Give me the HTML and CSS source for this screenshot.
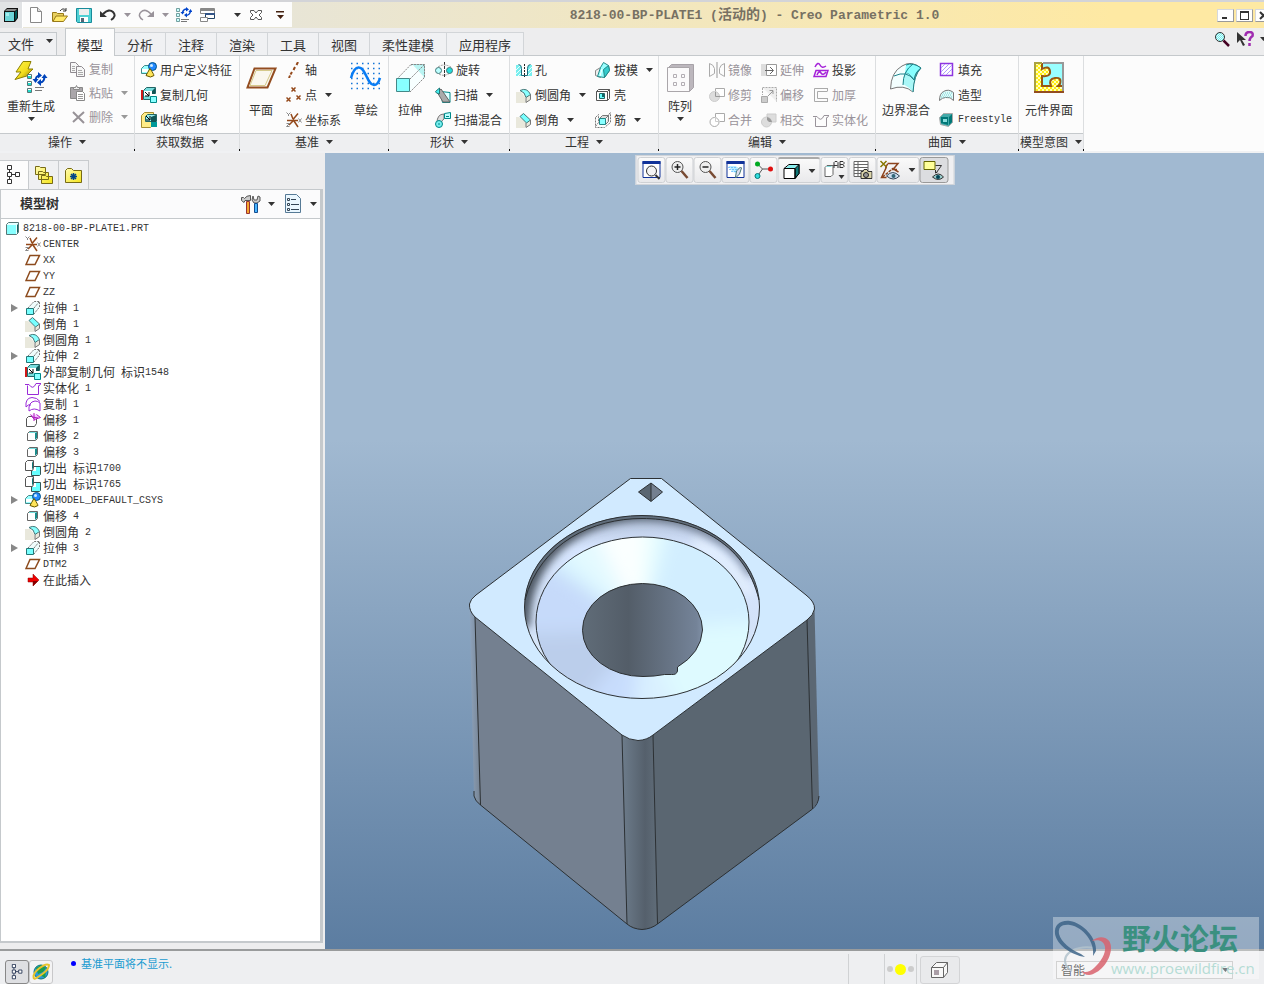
FILE: index.html
```html
<!DOCTYPE html>
<html lang="zh-CN">
<head>
<meta charset="utf-8">
<title>8218-00-BP-PLATE1 (活动的) - Creo Parametric 1.0</title>
<link rel="stylesheet" href="styles.css">
</head>
<body>
<svg class="sprite" aria-hidden="true">
  <defs>
    <linearGradient id="gold" x1="0" y1="0" x2="1" y2="1"><stop offset="0" stop-color="#fff44a"/><stop offset=".55" stop-color="#f2dc1c"/><stop offset="1" stop-color="#7a6a00"/></linearGradient>
    <linearGradient id="ice" x1="0" y1="0" x2="1" y2="1"><stop offset="0" stop-color="#fff"/><stop offset="1" stop-color="#7ff"/></linearGradient>
    <linearGradient id="folder" x1="0" y1="0" x2="1" y2="1"><stop offset="0" stop-color="#fffbb0"/><stop offset="1" stop-color="#f5e51c"/></linearGradient>
    <pattern id="bluecheck" width="2" height="2" patternUnits="userSpaceOnUse"><path fill="#dff" d="M0 0h2v2H0z"/><path fill="#7ee" d="M0 0h1v1H0zM1 1h1v1H1z"/></pattern>
    <pattern id="bigcheck" width="4" height="4" patternUnits="userSpaceOnUse"><path fill="#ffb" d="M0 0h4v4H0z"/><path fill="#fe1" d="M0 0h2v2H0zM2 2h2v2H2z"/></pattern>
  </defs>
  <symbol id="caret" viewBox="0 0 7 4"><path fill="currentColor" d="M0 0h7L3.500 4z"/></symbol>
  <symbol id="app" viewBox="0 0 16 16"><path fill="#111" d="M1 4l3-3h11v10l-3 4H1z"/><path fill="#888" d="M2 4l2-2h10l-2 2z"/><path fill="#055" d="M12 5l2-2v8l-2 2z"/><path fill="#6ed5d8" d="M2 5h9v9H2z"/><path fill="#a5ecee" d="M3 6h3v3H3z"/></symbol>
  <symbol id="new" viewBox="0 0 16 16"><path fill="#fff" stroke="#888" d="M2.500.5h7l4 4v11h-11z"/><path fill="#ddd" stroke="#888" d="M9.500.5v4h4"/></symbol>
  <symbol id="open" viewBox="0 0 16 16"><path fill="#e8d060" stroke="#997a18" d="M.5 14.500v-9h4l1 1h6v3"/><path fill="#ffe968" stroke="#997a18" d="M1 14.500l3-5.500h11.500l-4 5.500z"/><path fill="none" stroke="#333" d="M8 4q3-4 6-.5m0-2.500v3h-3"/></symbol>
  <symbol id="save" viewBox="0 0 16 16"><path fill="#4fd0d4" stroke="#188b9a" d="M.5 1.500h15v14H1.500l-1-1z"/><path fill="#eee" d="M3 2h10v6H3z"/><path fill="#fff" d="M4 10h8v5H4z"/><path fill="#567" d="M5 11h3v4H5z"/></symbol>
  <symbol id="undo" viewBox="0 0 16 16"><path fill="none" stroke="currentColor" stroke-width="2" d="M3 7Q9 1 13 5t-2 8"/><path fill="currentColor" d="M0 4v6h7z"/></symbol>
  <symbol id="redo" viewBox="0 0 16 16"><path fill="none" stroke="currentColor" stroke-width="1.500" d="M13 7Q7 1 3 5t2 8"/><path fill="currentColor" d="M16 4v6H9z"/></symbol>
  <symbol id="regen" viewBox="0 0 16 16"><path fill="#cff" stroke="#588" stroke-width=".8" d="M.5 1.500h3v3h-3zM.5 6.500h3v3h-3zM.5 11.500h3v3h-3z"/><path stroke="#777" d="M5 12.500h8M5 14.500h6"/><path fill="none" stroke="#04c" stroke-width="1.500" d="M6.500 6Q7 2 11 2M14.500 4Q14 8 10 8.500"/><path fill="#04c" d="M10 0l3 2.500-3 2zM11 6v4.500L8 8zM4.500 5h4L6.500 7.500zM12.500 5h4l-2-3z"/></symbol>
  <symbol id="wins" viewBox="0 0 16 16"><path fill="#fff" stroke="#888" d="M.5 1.500h14v5H.5z"/><path fill="#888" d="M1 2h14v2H1z"/><path fill="#fff" stroke="#246" d="M5.500 6.500h9v5h-9z"/><path fill="#358" d="M5 6h10v2H5z"/><path fill="#fff" stroke="#888" d="M.5 10.500h7v4h-7z"/></symbol>
  <symbol id="closewin" viewBox="0 0 16 16"><path fill="#fff" stroke="#555" d="M2.500 3.500H6L8 6l2-2.500h3.500v2L11 8l2.500 2.500v2H10L8 10l-2 2.500H2.500v-2L5 8 2.500 5.500z"/></symbol>
  <symbol id="custom" viewBox="0 0 9 8"><path fill="#421" d="M0 0h8v1.500H0zM1 4h7L4.500 8z"/></symbol>
  <symbol id="bolt" viewBox="0 0 34 34"><path fill="url(#gold)" stroke="#8d8000" d="M9 .5h8L14 8h5L13 14h3L1 18.500 7 11H2z"/><path fill="#fff" stroke="#577" d="M13.500 13.500h4v4h-4zM13.500 20.500h4v4h-4zM13.500 27.500h4v4h-4z"/><path fill="#2dc" d="M14 15h3v2h-3zM14 22h3v2h-3zM14 29h3v2h-3z"/><path stroke="#777" d="M21 26.500h9M21 29.500h7"/><path fill="none" stroke="#04b" stroke-width="2" d="M21.500 20q0-5 4-5.500M30.500 15q0 6-4 6.500"/><path fill="#04b" d="M24 11l4 3.500-4 3zM27 18v7l-4-3.500zM18.500 18h6l-3 4zM27.500 17h6l-3-4z"/></symbol>
  <symbol id="copy" viewBox="0 0 16 16"><path fill="#f7f7f7" stroke="#8f8a90" d="M.5 1.500h5l3 3v7h-8z"/><path fill="#f7f7f7" stroke="#8f8a90" d="M6.500 5.500h5l3 3v7h-8z"/><path stroke="#aaa" d="M2 5.500h3M2 7.500h3M2 9.500h3M8 9.500h4M8 11.500h5M8 13.500h5"/></symbol>
  <symbol id="paste" viewBox="0 0 16 16"><path fill="#aaa6aa" stroke="#888" d="M.5 2.500h12v11H.5z"/><path fill="#eee" stroke="#888" d="M3.500 4.500v-2h2l1-2 1 2h2v2z"/><path fill="#fff" stroke="#888" d="M6.500 6.500h6l2 2v7h-8z"/><path stroke="#999" d="M8 9.500h5M8 11.500h5M8 13.500h5"/></symbol>
  <symbol id="delete" viewBox="0 0 16 16"><path stroke="#979297" stroke-width="2" d="M3 3l11 11M14 3L3 13"/></symbol>
  <symbol id="udf" viewBox="0 0 16 16"><path fill="#9ff" stroke="#488" d="M.5 6.500l3-3h6v6l-2 2h-7z"/><path fill="#fff" d="M1 7h6v3H1z"/><circle cx="11.500" cy="4.500" r="4" fill="#28f" stroke="#058"/><circle cx="10.500" cy="3.500" r="1.500" fill="#cef"/><path fill="#ffe55a" stroke="#650" d="M9 6.500q4 6 4 7-3 3-8 0 1-2 4-7z"/></symbol>
  <symbol id="copygeom" viewBox="0 0 16 16"><path fill="#d01818" d="M0 3h2v10H0z"/><path fill="#7dd" stroke="#266" d="M2.500 3.500l3-3h9v6h-4v6h-8z"/><path fill="#fff" d="M3 4h8v5H3z"/><path fill="#155" d="M11 4l3-3v6h-3z"/><path stroke="#000" d="M4 5l4 4M8 5v4H4" fill="none"/><path fill="#8ff" stroke="#088" d="M9.500 9.500h6v6h-6z"/></symbol>
  <symbol id="shrink" viewBox="0 0 16 16"><path fill="#ffec88" stroke="#a58c30" d="M.5 3.500l3-3h9v12l-3 3h-9z"/><path fill="#9ee" stroke="#266" d="M4.500 4.500l2-2h9v7h-11z"/><path fill="#155" d="M10 5l5-2v7h-5z"/><path stroke="#000" fill="none" d="M5 4l4 4M9 4v4H5"/><path fill="#099" d="M10 10h6v5h-6z"/></symbol>
  <symbol id="planebig" viewBox="0 0 34 34"><path fill="#faf7ee" stroke="#934d20" stroke-width="2" d="M10.500 7.500h21l-8 19h-20z"/><path fill="none" stroke="#d5c98a" d="M12 9.500h16l-7 15H6z"/></symbol>
  <symbol id="plane" viewBox="0 0 16 16"><path fill="none" stroke="#8d4b1d" stroke-width="1.500" d="M5 3.500h9.500l-4.500 9H1z"/></symbol>
  <symbol id="axis" viewBox="0 0 16 16"><path stroke="#94491b" stroke-width="2" d="M12 0l-1.500 3M9 5L7.500 8M6 10l-1.500 2.500M4 13.500L3 16"/></symbol>
  <symbol id="points" viewBox="0 0 16 16"><path stroke="#94491b" stroke-width="1.500" d="M5.500.5l4 4m0-4l-4 4M.5 10.500l4 4m0-4l-4 4M10.500 8.500l4 4m0-4l-4 4"/></symbol>
  <symbol id="csys" viewBox="0 0 16 16"><path stroke="#94491b" stroke-width="1.500" d="M1 8.500h11M7 7.500l5-6M7 7L5 2M8 9l4 6M7 9l-4 4"/><path stroke="#888" fill="none" d="M.5.5l2 2 2-2M2.500 2v2M12.500 6.500l3 4m0-4l-3 4M.5 11.500h3l-3 3h3"/></symbol>
  <symbol id="sketch" viewBox="0 0 34 34"><path stroke="#1475d8" stroke-width="1.500" stroke-dasharray="1.500 4" d="M2 2.500h30M2 7.500h30M2 12.500h30M2 17.500h30M2 22.500h30M2 27.500h30"/><path fill="none" stroke="#087cf4" stroke-width="2.500" d="M2 17Q5 6 10 6.500C17 7 18 24 25 24Q29 24 31 17"/></symbol>
  <symbol id="extrudebig" viewBox="0 0 34 34"><path fill="#a6eff2" stroke="#5aa" d="M18.500 3.500h13v13h-13z" opacity=".6"/><path fill="#f7ffff" d="M4 18L19 4h12v12L17 31z"/><path fill="#b9f4f2" d="M20 4h11v12z"/><path fill="none" stroke="#888" stroke-dasharray="2 1" d="M4 18L18 3.500M17 18L31 4M17 31l14-14M18 3.500h13.500V17"/><path fill="#8ff" stroke="#488" d="M3.500 17.500h13v13h-13z"/></symbol>
  <symbol id="extrude" viewBox="0 0 16 16"><path fill="#effcfc" d="M3 8L9 1.500h5.500V7L9 14"/><path fill="none" stroke="#777" stroke-dasharray="2 1" d="M3 8L9 1.500h5.500V7L9 14M9 8l5-6"/><path fill="#7ff" stroke="#277" d="M1.500 8.500h7v6h-7z"/></symbol>
  <symbol id="revolve" viewBox="0 0 18 16"><path stroke="#333" stroke-dasharray="3 1" d="M9.500 0v16"/><path fill="none" stroke="#999" stroke-dasharray="2 1" d="M3 5Q9 1 16 5M4 12q5 3 11-1"/><circle cx="3.500" cy="8.500" r="3" fill="#bff" stroke="#477"/><circle cx="14.500" cy="8.500" r="3" fill="#2dd" stroke="#477"/></symbol>
  <symbol id="sweep" viewBox="0 0 16 16"><path fill="#dff" stroke="#088" d="M5.500 4.500l9.500 1v10H7.500z"/><path fill="#aaa" stroke="#666" d="M2 5l4-3 9 13H8z"/><path fill="#4ee" stroke="#277" d="M.5 4.500l4-3.500v6l-3-1z"/></symbol>
  <symbol id="sweepblend" viewBox="0 0 16 16"><path fill="#ddd" stroke="#777" d="M2 11Q2 2 9 2v5q-3 1-3 6z"/><path fill="#bff" stroke="#088" d="M9.500 1.500l6-1v6h-6z"/><circle cx="4" cy="12" r="3.500" fill="#7ee" stroke="#088"/><path fill="none" stroke="#088" d="M11 4.500h3M3 12h2"/></symbol>
  <symbol id="hole" viewBox="0 0 16 16"><path fill="#7ee" d="M0 3h16v11H0z"/><path stroke="#e8ffff" d="M0 8l5-5M0 12l9-9M2 14L13 3M7 14l9-9M11 14l5-5"/><path fill="#fff" stroke="#1a6a7a" d="M2.500 2.500q3 0 3 4v7h6v-7q0-4 3-4"/><path stroke="#222" stroke-dasharray="2 1" d="M8.500 2v13"/></symbol>
  <symbol id="round" viewBox="0 0 16 16"><path fill="#e9e8dc" d="M0 5h5l4 5v6H0zM9 16l6-3V7l-5 4z"/><path fill="#8ff" stroke="#477" d="M4 3.500Q11 0 14.500 7.500L10 10.500Q9 5 4 3.500z"/><path fill="none" stroke="#777" d="M10 10.500v5l4.500-3v-5"/></symbol>
  <symbol id="chamfer" viewBox="0 0 16 16"><path fill="#e9e8dc" d="M0 5h3l6 5v6H0zM9 15l5-2V8l-5 3z"/><path fill="#7ff" stroke="#477" d="M4 4.500l3.500-3L14.500 8 10.500 11z"/><path fill="none" stroke="#777" d="M10 11v4.500l4.500-3V8"/></symbol>
  <symbol id="draft" viewBox="0 0 16 16"><path fill="#eee" stroke="#888" d="M.5 8.500l5-3v10l-5-2z"/><path fill="#9ff" stroke="#288" d="M5.500 5.500l3-5 5 3 1 5-5 7-7-1z"/><path fill="#3cc" stroke="#288" d="M9.500 15.500l-1-8 5-4 1 5z"/><path stroke="#fff" d="M7 7l-2 7"/></symbol>
  <symbol id="shell" viewBox="0 0 16 16"><path fill="#fff" stroke="#555" d="M1.500 4.500l2-2h11v9l-2 2h-11zM1.500 4.500h11v9M12.500 4.500l2-2"/><path fill="#6ff" stroke="#266" d="M4.500 6.500h5v5h-5z"/><path fill="#166" d="M7 7h2v3H7z"/></symbol>
  <symbol id="rib" viewBox="0 0 16 16"><path fill="none" stroke="#777" stroke-dasharray="2 1" d="M.5 5.500v10h9l6-5v-10M.5 5.500l3-3v8l-3 4M12 5l3-4"/><path fill="#ddd" stroke="#777" d="M4.500 6.500l3-3h6l-3 3M13.500 3.500v6l-3 3"/><path fill="#8ff" stroke="#288" d="M4.500 6.500h6v6h-6z"/></symbol>
  <symbol id="array" viewBox="0 0 34 34"><path fill="#bcb7bd" stroke="#a7a2a8" d="M4.500 7.500l4-4h22v23l-4 4z"/><path fill="#fbfafb" stroke="#aaa6aa" d="M4.500 6.500h22v24h-22z"/><path fill="none" stroke="#b3aeb4" d="M10.500 13.500h3v3h-3zM18.500 13.500h3v3h-3zM10.500 21.500h3v3h-3zM18.500 21.500h3v3h-3z"/></symbol>
  <symbol id="mirror" viewBox="0 0 16 16"><path fill="none" stroke="#aaa" d="M.5 1.500q4 1 5 5v5l-5 3zM15.500 1.500q-4 1-5 5v5l5 3z"/><path stroke="#999" d="M8 0v16"/></symbol>
  <symbol id="trim" viewBox="0 0 16 16"><path fill="#fff" stroke="#aaa" d="M6.500 1.500h9v8h-9z"/><circle cx="5.500" cy="9.500" r="5" fill="#ddd" stroke="#ccc"/><path fill="none" stroke="#999" d="M6.500 5v4.500H11"/></symbol>
  <symbol id="merge" viewBox="0 0 16 16"><path fill="#fff" stroke="#aaa" d="M6.500 1.500h9v8h-9z"/><circle cx="5.500" cy="10" r="4.500" fill="#fff" stroke="#aaa"/><path fill="none" stroke="#ccc" d="M6.500 5v4.500H11"/></symbol>
  <symbol id="extend" viewBox="0 0 16 16"><path fill="#ddd" d="M0 2h5v12H0z"/><path fill="#fff" stroke="#999" d="M5.500 2.500h10v11h-10z"/><path stroke="#666" fill="none" d="M4 8.500h8M9 5l3.500 3.500L9 12"/></symbol>
  <symbol id="offset" viewBox="0 0 16 16"><path fill="#eee" stroke="#aaa" stroke-dasharray="2 1" d="M1.500.5h14v14M1.500 1v7"/><path fill="#ccc" stroke="#aaa" d="M.5 9.500h6v6h-6z"/><path stroke="#999" fill="none" d="M7 9l5-5M8.500 3.500H12V7"/></symbol>
  <symbol id="intersect" viewBox="0 0 16 16"><path fill="#ddd" stroke="#ccc" d="M6 2h9v8H6z"/><circle cx="5.500" cy="10" r="5" fill="#ddd" stroke="#ccc"/><path fill="#999" d="M6 5q4 1 5 5H8L6 8z"/></symbol>
  <symbol id="project" viewBox="0 0 16 16"><path fill="none" stroke="#a522d8" stroke-width="1.500" d="M2 5q3-6 5-2t6 1M1 14.500l2-6h12l-2 6zM4 13q2-5 4-2t5-1"/></symbol>
  <symbol id="thicken" viewBox="0 0 16 16"><path fill="none" stroke="#aaa" d="M14.500 1.500H1.500v13h13M14.500 4.500h-10v7h10M14.500 1v3M14.500 11v4"/></symbol>
  <symbol id="solidify" viewBox="0 0 16 16"><path fill="none" stroke="currentColor" d="M2.500 5.500v9h11v-9M0 4.500h4q4 6 7-1h5l-2.500 3"/></symbol>
  <symbol id="boundary" viewBox="0 0 34 34"><path fill="#f3ffff" stroke="#777" d="M1.500 28Q2 11 13 5q9-6 19 2-8 6-8 24-9-8-22.500-3z"/><path fill="#8ff" stroke="#1b8289" d="M16 12q5 0 9 7 1-8 7-12-8-6-15-3"/><path fill="#aaf7f7" d="M14 23q0-9 2.500-11 5 1 8.500 7l-1 12q-4-5-10-8z"/><path fill="none" stroke="#1b8289" d="M5 15q13-6 20 4M14 24q0-14 10-21M24 31q1-17 8-24"/></symbol>
  <symbol id="fill" viewBox="0 0 16 16"><path fill="#fff" stroke="#8e35e0" stroke-width="1.500" d="M1.500 1.500h12v12h-12z"/><path stroke="#b09aff" d="M2 6l4-4M2 10l8-8M3 13L13 3M7 13l6-6"/></symbol>
  <symbol id="style" viewBox="0 0 16 16"><path fill="#dffcfb" stroke="#777" d="M.5 13.500q0-7 4-9 5-3 10 1v8q-3-4-8-3-3 0-6 3z"/><path stroke="#7cc" stroke-dasharray="1 1" d="M3 8h10M4 6h9M2 10h11"/></symbol>
  <symbol id="freestyle" viewBox="0 0 16 16"><path fill="#4aa" stroke="#aaa" d="M.5 5.500l4-4 9 0v9l-4 4-8-2z"/><path fill="#077" d="M2 5h7v8l-7-2zM10 5l3-3v8l-3 3z"/><path fill="#8dd" d="M4 7h4v3H4z"/></symbol>
  <symbol id="interface" viewBox="0 0 34 34"><path fill="#9ff" d="M3 2h29v28H3z"/><path fill="url(#bigcheck)" d="M3 2h7v6q7-4 8 2t-8 5v10h9q-3-7 4-8t5 6l-2 2h6v6H3z"/><path fill="none" stroke="#985713" stroke-width="2" d="M10 2v6q7-4 8 2t-8 5v10h9q-3-7 4-8t5 6l-2 2h6"/><path fill="none" stroke="#aaa240" stroke-width="2" d="M10 2H3v29"/><path fill="none" stroke="#934d20" stroke-width="2" d="M2 31h30"/><path fill="none" stroke="#999" stroke-width="2" d="M31 30V2H11"/></symbol>
  <symbol id="search" viewBox="0 0 16 16"><circle cx="6" cy="6" r="4.500" fill="url(#bluecheck)" stroke="#333"/><path stroke="#402" stroke-width="2.500" d="M9.500 9.500L15 15"/></symbol>
  <symbol id="help" viewBox="0 0 18 16"><path fill="#333" d="M1 1v11l3-3 3 6 2-1-3-5h4z"/><path fill="none" stroke="#a02bb0" stroke-width="2.500" d="M9.500 5q0-4 4-4t3 4q-3 2-3 5M13.500 12v3"/></symbol>
  <symbol id="treeico" viewBox="0 0 16 20"><path fill="#fff" stroke="currentColor" d="M1.500.5h4v4h-4zM1.500 7.500h4v4h-4zM1.500 14.500h4v4h-4zM9.500 7.500h4v4h-4zM3.500 5v2M3.500 12v2M6 9.500h3"/></symbol>
  <symbol id="folders" viewBox="0 0 20 20"><g fill="url(#folder)" stroke="#776b16"><path d="M1.500 9.500v-8h4l1 1h5v7zM4.500 14.500v-8h4l1 1h5v7zM7.500 18.500v-8h4l1 1h6v7z"/></g></symbol>
  <symbol id="favorite" viewBox="0 0 18 18"><path fill="url(#folder)" stroke="#776b16" d="M.5 16.500V4.500l2-2h4l2 2h8v12z"/><path stroke="#048" stroke-width="1.500" d="M5 10.500h7M8.500 7v7M6 8l5 5M11 8l-5 5"/></symbol>
  <symbol id="tools" viewBox="0 0 20 20"><path fill="#ccc" stroke="#555" d="M.5 6.500v-3h2l1 1q2-3 6-3v5H4l-1 2zM12 2l1 4h3l1-4 2 1v4l-3 2h-3l-2-3z"/><path fill="#f5a52d" stroke="#933" d="M5.500 7.500h3v12h-3z"/><path fill="#47b5ff" stroke="#134d91" d="M13.500 9.500h3v9h-3z"/></symbol>
  <symbol id="list" viewBox="0 0 18 20"><path fill="#eaf7ff" stroke="#567a96" d="M1.500.5h11l4 4v14h-15z"/><path stroke="#345" d="M7 5.500h5M7 10.500h8M7 15.500h8"/><path fill="#fff" stroke="#345" d="M3.500 4.500h2v2h-2zM3.500 9.500h2v2h-2zM3.500 14.500h2v2h-2z"/></symbol>
  <symbol id="part" viewBox="0 0 16 16"><path fill="#e5ffff" stroke="#577" d="M1.500 4.500l2-2h10v10l-2 2h-10z"/><path fill="#166" d="M12 5l1-1v8l-1 2z"/><path fill="#8ff" d="M2 5h9v9H2z"/></symbol>
  <symbol id="quilt" viewBox="0 0 16 16"><path fill="none" stroke="#9a2bd8" d="M1 11Q0 2 7 1.500q5 0 8 4M1 11q2-3 5-2M4 15Q3 6 10 5q3 0 5 2v8M4 15q5-4 11 0"/></symbol>
  <symbol id="offquilt" viewBox="0 0 16 16"><path fill="#fff" stroke="#555" d="M1.500 6.500l2-2h8v7l-2 3h-8z"/><path fill="#f4c5ff" stroke="#b018c0" d="M5.500 2.500l4 5 6-2-4-3M7 5l6 1M9 1v8"/></symbol>
  <symbol id="box" viewBox="0 0 16 16"><path fill="#fff" stroke="#666" d="M2.500 5.500l2-2h8v7l-2 2h-8z"/><path fill="#198b8b" d="M10 5l2-1v6l-2 2z"/><path stroke="#7dd" d="M4 4.500h7"/></symbol>
  <symbol id="cut" viewBox="0 0 16 16"><path fill="#6ff" stroke="#355" d="M6.500 6.500h9v8l-1 1h-8z"/><path fill="#fff" d="M7 7h4v4H7z"/><path fill="#fff" stroke="#555" d="M.5 2.500l2-2h6v8l-1 2h-7z"/><path fill="#177" d="M7 3l1-2v7l-1 2z"/></symbol>
  <symbol id="insert" viewBox="0 0 16 16"><path fill="#e00" stroke="#800" stroke-width=".5" d="M3 6h5V2l6 6-6 6v-4H3z"/><path fill="#800" d="M8 9h5l-5 5z"/></symbol>
  <symbol id="expander" viewBox="0 0 8 10"><path fill="#888" d="M1 1l7 4-7 4z"/></symbol>
  <symbol id="refit" viewBox="0 0 20 20"><path fill="#fff" stroke="#139" d="M1.500 1.500h17v16h-17z"/><path fill="#139" d="M1 1h18v3H1z"/><circle cx="10" cy="11" r="5" fill="#f5f5f5" stroke="#333"/><path stroke="#333" stroke-width="2" d="M14 15l4 4"/></symbol>
  <symbol id="zoomin" viewBox="0 0 20 20"><circle cx="8" cy="7" r="5.500" fill="#eee" stroke="#555"/><path stroke="#222" stroke-width="1.500" d="M5 7h6M8 4v6"/><path stroke="#784a32" stroke-width="2.500" d="M12 11l6 7"/></symbol>
  <symbol id="zoomout" viewBox="0 0 20 20"><circle cx="8" cy="7" r="5.500" fill="#eee" stroke="#555"/><path stroke="#222" stroke-width="1.500" d="M5 7h6"/><path stroke="#784a32" stroke-width="2.500" d="M12 11l6 7"/></symbol>
  <symbol id="repaint" viewBox="0 0 20 20"><path fill="#fff" stroke="#139" d="M1.500 1.500h17v16h-17z"/><path fill="#139" d="M1 1h18v3H1z"/><path fill="#bef" d="M3 6h7l5 3-4 4-4-1z"/><path stroke="#29f" stroke-dasharray="1 2" d="M3 7.500h8M4 9.500h8M6 11.500h5"/><path fill="#dde" stroke="#477" d="M10 17l1-6 4-4 1 1-2 6-4 4z"/></symbol>
  <symbol id="triad" viewBox="0 0 20 20"><path stroke="#555" d="M4 4l5 5h7M9 9l-5 7" fill="none"/><circle cx="4" cy="4" r="2.500" fill="#0a2"/><circle cx="17" cy="9" r="2.500" fill="#e01010"/><circle cx="4" cy="16" r="2.500" fill="#3dd" stroke="#077"/></symbol>
  <symbol id="shaded" viewBox="0 0 20 20"><path fill="#fff" stroke="#000" d="M2.500 7.500l5-4h10v9l-4 5h-11z"/><path fill="#8ee" d="M4 7l4-3h8l-3 3z"/><path fill="#177" stroke="#000" d="M13.500 7.500l4-4v9l-4 5z"/><path fill="none" stroke="#000" d="M2.500 7.500h11v10"/></symbol>
  <symbol id="saved" viewBox="0 0 22 20"><path fill="#fff" stroke="#666" d="M1.500 7.500l2-2h6v9l-2 2h-6z"/><path stroke="#8dd" d="M3 6.500h5"/><path fill="none" stroke="#333" d="M10.500 8V2.500l1-1h2l1 1V8M10 5.500h4M16.500 8V1.500h3l1 1v1l-1 1h-3M19 4.500l1.500 1v1l-1 1h-3"/><path fill="#333" d="M15 15h6l-3 4z"/></symbol>
  <symbol id="viewmgr" viewBox="0 0 20 20"><path fill="#fff" stroke="#666" d="M1.500 1.500h14v15h-14zM1.500 4.500h14M1.500 7.500h14M1.500 10.500h14M1.500 13.500h14M5.500 1.500v15"/><path fill="#dcd5aa" stroke="#333" d="M8.500 11.500h2l1-2h3l1 2h4v7h-11z"/><circle cx="13.500" cy="15" r="2.500" fill="#999" stroke="#222"/></symbol>
  <symbol id="datum" viewBox="0 0 22 20"><path fill="none" stroke="#8c431d" stroke-width="1.500" d="M8 3.500h10.500l-5 6h4M18 4l-4 5 5 3M7 7L2 17.500h5M8 4L6 8"/><path stroke="#8c431d" stroke-width="1.500" stroke-dasharray="3 1" d="M3 17L14 8"/><path stroke="#870" stroke-width="1.500" d="M1 1l6 6m0-6L1 7"/><path fill="#cde" stroke="#345" d="M7 16q6-7 13 0-6 6-13 0z"/><circle cx="14" cy="16" r="2" fill="#367"/></symbol>
  <symbol id="annot" viewBox="0 0 22 20"><path fill="#ff9" stroke="#660" d="M1.500 1.500h11v8h-11z"/><path fill="none" stroke="#333" d="M13 5.500h6l-5 7M15 12l-2 1v-3"/><path fill="#9cc" stroke="#333" d="M10 17q6-6 11 0-5 5-11 0z"/><circle cx="15.500" cy="17" r="2" fill="#045"/></symbol>
  <symbol id="globe" viewBox="0 0 20 20"><circle cx="10" cy="10" r="7" fill="#2a9adc" stroke="#177"/><path fill="#1b9d4f" d="M5 6l5-3 5 3-3 4-5 2zM9 13l6-4-1 7z"/><path fill="none" stroke="#e6c32d" stroke-width="2" d="M3 17Q1 12 8 6.500T18 3q0 4-6 8.500T3 17"/></symbol>
  <symbol id="wire" viewBox="0 0 20 20"><path fill="#f8f8f8" stroke="#666" d="M1.500 7.500l5-5h11v10l-4 5h-12zM1.500 7.500h12v10M13.500 7.500l4-5"/><path fill="#aa9ea7" d="M4 10h5v5H4z"/></symbol>
</svg>

<header class="titlebar">
  <div class="app-icon"><svg class="i16"><use href="#app"/></svg></div>
  <div class="quick">
    <button aria-label="新建"><svg class="i16"><use href="#new"/></svg></button>
    <button aria-label="打开"><svg class="i16"><use href="#open"/></svg></button>
    <button aria-label="保存"><svg class="i16"><use href="#save"/></svg></button>
    <button aria-label="撤消"><svg class="i16"><use href="#undo"/></svg></button>
    <button class="narrow off" aria-label="撤消列表"><svg class="caret"><use href="#caret"/></svg></button>
    <button class="off" aria-label="重做"><svg class="i16"><use href="#redo"/></svg></button>
    <button class="narrow off" aria-label="重做列表"><svg class="caret"><use href="#caret"/></svg></button>
    <button aria-label="重新生成"><svg class="i16"><use href="#regen"/></svg></button>
    <button aria-label="窗口"><svg class="i16"><use href="#wins"/></svg></button>
    <button class="narrow spaced" aria-label="窗口列表"><svg class="caret"><use href="#caret"/></svg></button>
    <button aria-label="关闭窗口"><svg class="i16"><use href="#closewin"/></svg></button>
    <button aria-label="自定义"><svg class="custom"><use href="#custom"/></svg></button>
  </div>
  <h1>8218-00-BP-PLATE1 (<span>活动的</span>) - Creo Parametric 1.0</h1>
  <div class="winbtns">
    <button aria-label="最小化"><svg viewBox="0 0 11 9"><path d="M2 6h5v2H2z"/></svg></button>
    <button aria-label="最大化"><svg viewBox="0 0 11 9"><path fill-rule="evenodd" d="M1 0h9v9H1zM2 2v6h7V2z"/></svg></button>
    <button aria-label="关闭"><svg viewBox="0 0 11 9"><path fill="none" stroke="#333" stroke-width="2" d="M2 1l7 7M9 1L2 8"/></svg></button>
  </div>
</header>

<nav class="tabs">
  <button class="file">文件<svg class="caret"><use href="#caret"/></svg></button>
  <button class="tab on">模型</button>
  <button class="tab">分析</button>
  <button class="tab">注释</button>
  <button class="tab">渲染</button>
  <button class="tab">工具</button>
  <button class="tab">视图</button>
  <button class="tab">柔性建模</button>
  <button class="tab">应用程序</button>
  <div class="helpers">
    <button aria-label="搜索"><svg class="i16"><use href="#search"/></svg></button>
    <button aria-label="帮助"><svg class="i18"><use href="#help"/></svg></button>
    <button aria-label="更多帮助"><svg class="caret"><use href="#caret"/></svg></button>
  </div>
</nav>

<section class="ribbon">
  <div class="group ops">
    <div class="tools">
      <button class="big wide high"><svg><use href="#bolt"/></svg>重新生成<svg class="caret"><use href="#caret"/></svg></button>
      <div class="col">
        <button class="tool off"><svg class="i16"><use href="#copy"/></svg>复制</button>
        <button class="tool off"><svg class="i16"><use href="#paste"/></svg>粘贴<svg class="caret"><use href="#caret"/></svg></button>
        <button class="tool off"><svg class="i16"><use href="#delete"/></svg>删除<svg class="caret"><use href="#caret"/></svg></button>
      </div>
    </div>
    <button class="title">操作<svg class="caret"><use href="#caret"/></svg></button>
  </div>
  <div class="group data">
    <div class="tools">
      <div class="col">
        <button class="tool"><svg class="i16"><use href="#udf"/></svg>用户定义特征</button>
        <button class="tool"><svg class="i16"><use href="#copygeom"/></svg>复制几何</button>
        <button class="tool"><svg class="i16"><use href="#shrink"/></svg>收缩包络</button>
      </div>
    </div>
    <button class="title">获取数据<svg class="caret"><use href="#caret"/></svg></button>
  </div>
  <div class="group datum">
    <div class="tools">
      <button class="big"><svg><use href="#planebig"/></svg>平面</button>
      <div class="col">
        <button class="tool"><svg class="i16"><use href="#axis"/></svg>轴</button>
        <button class="tool"><svg class="i16"><use href="#points"/></svg>点<svg class="caret"><use href="#caret"/></svg></button>
        <button class="tool"><svg class="i16"><use href="#csys"/></svg>坐标系</button>
      </div>
      <button class="big"><svg><use href="#sketch"/></svg>草绘</button>
    </div>
    <button class="title">基准<svg class="caret"><use href="#caret"/></svg></button>
  </div>
  <div class="group shape">
    <div class="tools">
      <button class="big"><svg><use href="#extrudebig"/></svg>拉伸</button>
      <div class="col">
        <button class="tool"><svg class="i18"><use href="#revolve"/></svg>旋转</button>
        <button class="tool"><svg class="i16"><use href="#sweep"/></svg>扫描<svg class="caret"><use href="#caret"/></svg></button>
        <button class="tool"><svg class="i16"><use href="#sweepblend"/></svg>扫描混合</button>
      </div>
    </div>
    <button class="title">形状<svg class="caret"><use href="#caret"/></svg></button>
  </div>
  <div class="group eng">
    <div class="tools">
      <div class="col">
        <button class="tool"><svg class="i16"><use href="#hole"/></svg>孔</button>
        <button class="tool"><svg class="i16"><use href="#round"/></svg>倒圆角<svg class="caret"><use href="#caret"/></svg></button>
        <button class="tool"><svg class="i16"><use href="#chamfer"/></svg>倒角<svg class="caret"><use href="#caret"/></svg></button>
      </div>
      <div class="col">
        <button class="tool"><svg class="i16"><use href="#draft"/></svg>拔模<svg class="caret"><use href="#caret"/></svg></button>
        <button class="tool"><svg class="i16"><use href="#shell"/></svg>壳</button>
        <button class="tool"><svg class="i16"><use href="#rib"/></svg>筋<svg class="caret"><use href="#caret"/></svg></button>
      </div>
    </div>
    <button class="title">工程<svg class="caret"><use href="#caret"/></svg></button>
  </div>
  <div class="group edit">
    <div class="tools">
      <button class="big high"><svg><use href="#array"/></svg>阵列<svg class="caret"><use href="#caret"/></svg></button>
      <div class="col">
        <button class="tool off"><svg class="i16"><use href="#mirror"/></svg>镜像</button>
        <button class="tool off"><svg class="i16"><use href="#trim"/></svg>修剪</button>
        <button class="tool off"><svg class="i16"><use href="#merge"/></svg>合并</button>
      </div>
      <div class="col">
        <button class="tool off"><svg class="i16"><use href="#extend"/></svg>延伸</button>
        <button class="tool off"><svg class="i16"><use href="#offset"/></svg>偏移</button>
        <button class="tool off"><svg class="i16"><use href="#intersect"/></svg>相交</button>
      </div>
      <div class="col">
        <button class="tool"><svg class="i16"><use href="#project"/></svg>投影</button>
        <button class="tool off"><svg class="i16"><use href="#thicken"/></svg>加厚</button>
        <button class="tool off"><svg class="i16"><use href="#solidify"/></svg>实体化</button>
      </div>
    </div>
    <button class="title">编辑<svg class="caret"><use href="#caret"/></svg></button>
  </div>
  <div class="group surf">
    <div class="tools">
      <button class="big wide"><svg><use href="#boundary"/></svg>边界混合</button>
      <div class="col">
        <button class="tool"><svg class="i16"><use href="#fill"/></svg>填充</button>
        <button class="tool"><svg class="i16"><use href="#style"/></svg>造型</button>
        <button class="tool"><svg class="i16"><use href="#freestyle"/></svg><span class="en">Freestyle</span></button>
      </div>
    </div>
    <button class="title">曲面<svg class="caret"><use href="#caret"/></svg></button>
  </div>
  <div class="group intent">
    <div class="tools">
      <button class="big wide"><svg><use href="#interface"/></svg>元件界面</button>
    </div>
    <button class="title">模型意图<svg class="caret"><use href="#caret"/></svg></button>
  </div>
</section>

<main class="work">
  <aside class="navigator">
    <div class="navtabs">
      <button class="on" aria-label="模型树"><svg class="t20"><use href="#treeico"/></svg></button>
      <button aria-label="文件夹浏览器"><svg class="i20"><use href="#folders"/></svg></button>
      <button aria-label="收藏夹"><svg class="i18s"><use href="#favorite"/></svg></button>
    </div>
    <div class="panel">
      <div class="panelhead">
        <h2>模型树</h2>
        <button aria-label="设置"><svg class="i20"><use href="#tools"/></svg><svg class="caret"><use href="#caret"/></svg></button>
        <button aria-label="显示"><svg class="i20"><use href="#list"/></svg><svg class="caret"><use href="#caret"/></svg></button>
      </div>
      <ul class="tree">
        <li class="root"><svg class="i16"><use href="#part"/></svg><span class="en">8218-00-BP-PLATE1.PRT</span></li>
        <li><svg class="i16"><use href="#csys"/></svg><span class="en">CENTER</span></li>
        <li><svg class="i16"><use href="#plane"/></svg><span class="en">XX</span></li>
        <li><svg class="i16"><use href="#plane"/></svg><span class="en">YY</span></li>
        <li><svg class="i16"><use href="#plane"/></svg><span class="en">ZZ</span></li>
        <li class="fold"><button aria-label="展开"><svg><use href="#expander"/></svg></button><svg class="i16"><use href="#extrude"/></svg>拉伸<span class="en"> 1</span></li>
        <li><svg class="i16"><use href="#chamfer"/></svg>倒角<span class="en"> 1</span></li>
        <li><svg class="i16"><use href="#round"/></svg>倒圆角<span class="en"> 1</span></li>
        <li class="fold"><button aria-label="展开"><svg><use href="#expander"/></svg></button><svg class="i16"><use href="#extrude"/></svg>拉伸<span class="en"> 2</span></li>
        <li><svg class="i16"><use href="#copygeom"/></svg>外部复制几何<span class="en"> </span>标识<span class="en">1548</span></li>
        <li><svg class="i16 violet"><use href="#solidify"/></svg>实体化<span class="en"> 1</span></li>
        <li><svg class="i16"><use href="#quilt"/></svg>复制<span class="en"> 1</span></li>
        <li><svg class="i16"><use href="#offquilt"/></svg>偏移<span class="en"> 1</span></li>
        <li><svg class="i16"><use href="#box"/></svg>偏移<span class="en"> 2</span></li>
        <li><svg class="i16"><use href="#box"/></svg>偏移<span class="en"> 3</span></li>
        <li><svg class="i16"><use href="#cut"/></svg>切出<span class="en"> </span>标识<span class="en">1700</span></li>
        <li><svg class="i16"><use href="#cut"/></svg>切出<span class="en"> </span>标识<span class="en">1765</span></li>
        <li class="fold"><button aria-label="展开"><svg><use href="#expander"/></svg></button><svg class="i16"><use href="#udf"/></svg>组<span class="en">MODEL_DEFAULT_CSYS</span></li>
        <li><svg class="i16"><use href="#box"/></svg>偏移<span class="en"> 4</span></li>
        <li><svg class="i16"><use href="#round"/></svg>倒圆角<span class="en"> 2</span></li>
        <li class="fold"><button aria-label="展开"><svg><use href="#expander"/></svg></button><svg class="i16"><use href="#extrude"/></svg>拉伸<span class="en"> 3</span></li>
        <li><svg class="i16"><use href="#plane"/></svg><span class="en">DTM2</span></li>
        <li><svg class="i16"><use href="#insert"/></svg>在此插入</li>
      </ul>
    </div>
  </aside>

  <section class="canvas">
    <svg class="model" viewBox="325 153 939 796" role="img" aria-label="零件模型">
      <defs>
        <linearGradient id="corner"><stop offset="0" stop-color="#6d7c8b"/><stop offset=".65" stop-color="#55606c"/><stop offset="1" stop-color="#606d79"/></linearGradient>
        <linearGradient id="edgeL"><stop offset="0" stop-color="#8fa4bd"/><stop offset="1" stop-color="#748190"/></linearGradient>
        <linearGradient id="bore"><stop offset="0" stop-color="#606c78"/><stop offset=".38" stop-color="#535d68"/><stop offset=".95" stop-color="#748398"/><stop offset="1" stop-color="#7f8fa5"/></linearGradient>
        <linearGradient id="rim" x1="0" y1="0" x2="0" y2="1"><stop offset="0" stop-color="#aab9d2"/><stop offset=".2" stop-color="#d7e6ff"/><stop offset=".6" stop-color="#d3e2f8"/><stop offset="1" stop-color="#e2f5ff"/></linearGradient>
        <linearGradient id="dark" x1="0" y1="0" x2="1" y2="0"><stop offset="0" stop-color="#48535f"/><stop offset=".35" stop-color="#48535f"/><stop offset="1" stop-color="#6f7d92" stop-opacity=".75"/></linearGradient>
        <filter id="soft" x="-20%" y="-20%" width="140%" height="140%"><feGaussianBlur stdDeviation="4"/></filter>
        <filter id="softer" x="-20%" y="-20%" width="140%" height="140%"><feGaussianBlur stdDeviation="9"/></filter>
        <clipPath id="outer"><ellipse cx="642" cy="607" rx="117.500" ry="91.500"/></clipPath>
        <clipPath id="inner"><ellipse cx="642.500" cy="622" rx="106.500" ry="85"/></clipPath>
      </defs>
      <path fill="#5b6773" d="M806 600l8.500 8 4.500 189q-1 6-7 12z"/>
      <path fill="url(#edgeL)" d="M469.500 604l4.500 192q1 5 7 9l-3-190z"/>
      <path fill="#748090" d="M475 617l147 118 5 189-146.500-119z"/>
      <path fill="#5a6671" d="M653 735l154-115 5.500 189L657.500 924z"/>
      <path fill="url(#corner)" d="M622 735h31l4.500 189q-6 5-15.500 5.500-11-.5-15-5.500z"/>
      <path class="edge" fill="none" d="M475 617l5.500 188M622 735l5 189M653 735l4.500 189M807 620l5.500 189M474 791v5q1 5 6.500 9L627 924q6 5 15 5.500 9-.5 15.500-5.500l155-115q6-5 6.500-13"/>
      <path class="edge" fill="#d1eaff" d="M630.500 478.500h31L806 595q9 7 8.500 14-1 6-7.500 11L653 735q-6 5-15 5.500-9-.5-16-5.500L475 617q-6-6-5.500-13 1-5 6.500-9z"/>
      <path fill="#5a6671" d="M638.500 492l12.500-9v18.500z"/><path fill="#748090" d="M662.500 492L651 483v18.500z"/>
      <path class="edge" fill="none" d="M638.500 492l12.500-9 11.500 9L651 501.500zM651 483v18"/>
      <g clip-path="url(#outer)">
        <path fill="url(#rim)" d="M520 510h245v195H520z"/>
        <path fill="none" stroke="url(#dark)" stroke-width="14" filter="url(#soft)" d="M523 627C521 560 575 514 642 514c50 0 95 25 111 60"/>
        <path fill="none" stroke="#f4fcff" stroke-width="5" opacity=".8" filter="url(#soft)" d="M693 541q42 20 56 53"/>
        <g clip-path="url(#inner)">
          <path fill="#d8f4ff" d="M530 530h225v175H530z"/>
          <g filter="url(#softer)">
            <path fill="#c6dafa" d="M642 630L500 530v115z"/>
            <path fill="#bbceeb" d="M642 630L500 635l40 80 30 10z"/>
            <path fill="#c8ddfd" d="M642 630l-82 100h75z"/>
            <path fill="#d9f0ff" d="M642 630l-10 100h60z"/>
            <path fill="#defaff" d="M642 630l45 95 80-10V620z"/>
            <path fill="#d2eeff" d="M642 630l120-10-20-90h-70z"/>
            <path fill="#e9ffff" d="M642 630l25-120h-40z"/>
            <path fill="#fbffff" d="M642 630l5-130h-70z"/>
            <path fill="#e4faff" d="M642 630l-65-120-35 20z"/>
          </g>
        </g>
        <ellipse class="edge" fill="none" cx="642.500" cy="622" rx="106.500" ry="85"/>
      </g>
      <path fill="#606d7b" d="M525 600C530 551 580 515.500 642 515.500S754 551 759 600C745 540 690 518.500 642 518.500S540 542 525 600z"/>
      <path class="edge" fill="none" d="M525 600C540 542 594 518.500 642 518.500S745 540 759 600"/>
      <ellipse class="edge" fill="none" cx="642" cy="607" rx="117.500" ry="91.500"/>
      <path class="edge" fill="url(#bore)" d="M677.500 667v4q-1 4-6 3.500h-7q-10 2-21.500 2A60 46.500 0 1 1 702.500 630Q701 653 677.500 667z"/>
    </svg>

    <div class="viewbar">
      <button aria-label="重新调整"><svg class="i20"><use href="#refit"/></svg></button>
      <button aria-label="放大"><svg class="i20"><use href="#zoomin"/></svg></button>
      <button aria-label="缩小"><svg class="i20"><use href="#zoomout"/></svg></button>
      <button aria-label="重画"><svg class="i20"><use href="#repaint"/></svg></button>
      <button aria-label="旋转中心"><svg class="i20"><use href="#triad"/></svg></button>
      <button class="drop press" aria-label="显示样式"><svg class="i20"><use href="#shaded"/></svg><svg class="caret"><use href="#caret"/></svg></button>
      <button aria-label="已保存方向"><svg class="i22"><use href="#saved"/></svg></button>
      <button aria-label="视图管理器"><svg class="i20"><use href="#viewmgr"/></svg></button>
      <button class="drop" aria-label="基准显示"><svg class="i22"><use href="#datum"/></svg><svg class="caret"><use href="#caret"/></svg></button>
      <button class="pressed" aria-label="注释显示"><svg class="i22"><use href="#annot"/></svg></button>
    </div>
  </section>
</main>

<footer class="status">
  <button class="sbtn pressed" aria-label="导航器"><svg class="t16"><use href="#treeico"/></svg></button>
  <button class="sbtn" aria-label="浏览器"><svg class="i20"><use href="#globe"/></svg></button>
  <p class="msg"><i></i>基准平面将不显示.</p>
  <div class="cell"></div>
  <div class="cell lights"><i></i><i class="lit"></i><i></i></div>
  <button class="wirebtn" aria-label="选择过滤"><svg class="i20"><use href="#wire"/></svg></button>
  <label class="filter"><select aria-label="过滤器"><option>智能</option></select><svg class="caret"><use href="#caret"/></svg></label>
  <div class="watermark">
    <svg viewBox="0 0 62 62" aria-hidden="true">
      <path fill="none" stroke="#b3c3cd" stroke-width="2" d="M42 31C24 28 8 36 13 48q2 4 6 6"/>
      <path fill="#3d6488" fill-rule="evenodd" d="M2 17C1 8 7 3 17 4c13 2 27 17 26 30l-3 5C42 25 30 10 17 8 9 7 5 10 6 17c2 8 12 16 22 20l4 3C18 38 4 28 2 17z"/>
      <path fill="#d9636e" d="M39 24c8-7 20-4 19 8-1 13-12 25-22 26-4 0-6-2-8-4 4 2 9 1 13-3 7-6 12-15 11-21-1-6-6-8-13-6z"/>
    </svg>
    <div class="words"><strong>野火论坛</strong><span>www.proewildfire.cn</span></div>
  </div>
</footer>
</body>
</html>
```
FILE: styles.css
```css
* { box-sizing: border-box; }
body {
  margin: 0;
  height: 100vh;
  display: flex;
  flex-direction: column;
  overflow: hidden;
  background: #ededee;
  color: #333;
  font: 12px/14px "Noto Sans CJK SC", sans-serif;
}
button {
  margin: 0;
  padding: 0;
  border: 0;
  background: none;
  color: inherit;
  font: inherit;
  white-space: nowrap;
}
svg { display: block; flex: none; }
h1, h2, p, ul { margin: 0; padding: 0; }
.sprite { position: absolute; width: 0; height: 0; }
.i16 { width: 16px; height: 16px; }
.i18 { width: 18px; height: 16px; }
.i18s { width: 18px; height: 18px; }
.i20 { width: 20px; height: 20px; }
.i22 { width: 22px; height: 20px; }
.t20 { width: 16px; height: 20px; }
.t16 { width: 13px; height: 16px; color: #124; }
.caret { width: 7px; height: 4px; }
.custom { width: 9px; height: 8px; }
.violet { color: #9a2bd8; }
.en {
  padding-top: 1px;
  font: 10px/14px "Liberation Mono", monospace;
  white-space: pre;
}
.off { color: #99939a; }

.titlebar {
  flex: none;
  display: flex;
  height: 28px;
  border-top: 2px solid #d3d4d8;
  background: linear-gradient(90deg, #e8e5d6 291px, #fee9a3 88%);
}
.app-icon {
  display: flex;
  align-items: center;
  width: 23px;
  padding-left: 3px;
  background: #e1e3e5;
  border-right: 1px solid #fff;
}
.quick {
  display: flex;
  margin-bottom: 1px;
  padding-left: 1px;
  background: #fcfcfc;
}
.quick button { display: grid; place-items: center; width: 24px; }
.quick .narrow { width: 14px; }
.quick .spaced { margin-left: 10px; }
.titlebar h1 {
  flex: 1;
  align-self: center;
  padding-bottom: 1px;
  color: #777163;
  text-align: center;
  white-space: nowrap;
  font: bold 13px/16px "Liberation Mono", monospace;
}
.titlebar h1 span { font: bold 14px/16px "Noto Sans CJK SC", sans-serif; }
.winbtns { display: flex; align-items: center; gap: 2px; margin-right: -8px; }
.winbtns button {
  padding: 1px 2px;
  background: #fff;
  border: 1px solid #d5d8de;
  border-right-color: #999;
  border-bottom-color: #999;
}
.winbtns svg { width: 11px; height: 9px; fill: #333; }

.tabs {
  flex: none;
  display: flex;
  align-items: flex-end;
  height: 28px;
  font-size: 13px;
  line-height: 20px;
  border-bottom: 1px solid #c5c9cc;
}
.file {
  display: flex;
  align-items: center;
  gap: 12px;
  width: 57px;
  height: 23px;
  margin-right: 8px;
  padding-left: 8px;
  border: solid #c5c9cc;
  border-width: 1px 1px 0 0;
  background: #f0f1f3;
}
.file .caret { margin-bottom: 6px; }
.tab {
  height: 23px;
  padding: 1px 12px 0;
  border: solid #d2d5d8;
  border-width: 1px 1px 0 0;
  background: #f0f1f3;
}
.tab.on {
  height: 28px;
  margin-bottom: -1px;
  padding: 4px 11px 0;
  border: solid #c5c9cc;
  border-width: 1px 1px 0;
  background: #fcfcfc;
}
.helpers {
  display: flex;
  align-items: center;
  gap: 6px;
  height: 28px;
  margin: 0 -3px 2px auto;
}

.ribbon {
  flex: none;
  display: flex;
  height: 97px;
  background: #fcfcfc;
  border-bottom: 2px solid #f0f1f3;
}
.group {
  flex: none;
  display: flex;
  flex-direction: column;
  border-right: 1px solid;
  border-image: linear-gradient(#dcdee0 97%, #111 97%) 1;
}
.tools { flex: 1; display: flex; padding: 1px 3px 0; }
.ops { width: 135px; }
.ops .tools { padding-left: 4px; }
.data { width: 105px; }
.data .tools, .eng .tools { padding-left: 6px; }
.datum, .eng { width: 149px; }
.shape { width: 121px; }
.edit { width: 217px; }
.surf { width: 143px; }
.intent { width: 65px; }
.title {
  display: flex;
  align-items: center;
  justify-content: center;
  gap: 7px;
  height: 18px;
  padding-bottom: 2px;
  background: #eeeff1;
  border-top: 1px solid #c5c9cc;
}
.title .caret, .tool .caret { color: #333; }
.tool.off .caret { color: #999; }
.col { display: flex; flex-direction: column; margin-left: 7px; }
.ops .col { margin-left: 12px; }
.surf .col { margin-left: 6px; }
.edit .big + .col { margin-left: 11px; }
.col + .col { margin-left: 9px; }
.tools > .col:first-child { margin-left: 0; }
.tool {
  display: flex;
  align-items: center;
  gap: 3px;
  height: 25px;
}
.ops .tool { height: 24px; }
.tool .caret { margin-left: 5px; }
.big {
  display: flex;
  flex-direction: column;
  align-items: center;
  gap: 8px;
  width: 36px;
  height: 72px;
  padding-top: 4px;
}
.big.high { gap: 4px; }
.big svg { width: 34px; height: 34px; }
.big .caret { width: 7px; height: 4px; }
.col + .big { margin-left: 7px; }
.big.wide { width: 54px; }

.work { flex: 1; min-height: 0; display: flex; }
.navigator {
  flex: none;
  display: flex;
  flex-direction: column;
  width: 325px;
  padding: 7px 2px 6px 0;
}
.navtabs { display: flex; height: 29px; }
.navtabs button {
  display: grid;
  place-items: center;
  width: 30px;
  border: 1px solid #c8cbce;
  border-width: 1px 1px 0 0;
  background: #eff0f2;
}
.navtabs .on { width: 29px; background: #fcfcfc; }
.panel {
  flex: 1;
  display: flex;
  flex-direction: column;
  border: solid #c5c9cc;
  border-width: 1px 3px 2px 1px;
  background: #fff;
}
.panelhead {
  display: flex;
  align-items: center;
  gap: 8px;
  height: 29px;
  padding: 0 3px 0 19px;
  border-bottom: 1px solid #c5c9cc;
  background: #fbfbfc;
}
.panelhead h2 { margin-right: auto; padding-bottom: 2px; font-size: 13px; }
.panelhead button { display: flex; align-items: center; gap: 7px; }
.tree { flex: 1; padding: 1px 0; list-style: none; }
.tree li {
  display: flex;
  align-items: center;
  height: 16px;
  padding-left: 24px;
  white-space: pre;
}
.tree .i16 { margin-right: 2px; }
.tree .root { padding-left: 4px; }
.tree .fold { padding-left: 9px; }
.tree .fold button { width: 15px; }
.tree .fold button svg { width: 8px; height: 10px; }

.canvas {
  flex: 1;
  position: relative;
  min-width: 0;
  background: linear-gradient(#a1b9d1 36%, #5c7da1);
}
.model { width: 100%; height: 100%; }
.edge { stroke: #2c3033; stroke-width: 1; }
.viewbar {
  position: absolute;
  top: 2px;
  left: 50%;
  transform: translateX(-50%);
  display: flex;
  height: 30px;
  padding: 1px 5px 1px 1px;
  border: 1px solid #d0d4d9;
  background: #f0f0f2;
}
.viewbar button {
  display: flex;
  align-items: center;
  justify-content: center;
  width: 28px;
  border: 1px solid #cfd1d4;
  border-radius: 3px;
  background: linear-gradient(#fafafa, #e9e9eb);
}
.viewbar .drop { gap: 7px; width: 43px; }
.viewbar .press { border-top: 2px solid #aaa; }
.viewbar .pressed { width: 29px; background: #dcdde0; border-color: #999; }

.status {
  flex: none;
  position: relative;
  display: flex;
  align-items: flex-end;
  height: 35px;
  padding-left: 5px;
  border-top: 2px solid #999b9c;
  background: #eeeff1;
}
.sbtn {
  display: grid;
  place-items: center;
  width: 24px;
  height: 24px;
  border: 1px solid #c8c8ca;
  border-radius: 3px;
  background: #f3f3f4;
}
.sbtn.pressed { border-color: #888; background: #dedfe2; }
.msg {
  align-self: flex-start;
  display: flex;
  align-items: center;
  gap: 5px;
  flex: 1;
  margin: 5px 0 0 18px;
  color: #1a9bd0;
  font-size: 11px;
}
.msg i { width: 5px; height: 5px; border-radius: 50%; background: #00f; }
.cell { width: 36px; height: 30px; border-left: 1px solid #d0d2d4; }
.lights {
  display: flex;
  align-items: center;
  justify-content: center;
  gap: 2px;
  width: 33px;
  border-right: 1px solid #d0d2d4;
}
.lights i { width: 6px; height: 6px; border-radius: 50%; background: #ccc; }
.lights .lit { width: 11px; height: 11px; background: #ff0; }
.wirebtn {
  display: grid;
  place-items: center;
  width: 40px;
  height: 28px;
  margin-left: 3px;
  border: 1px solid #d3d4d6;
  border-radius: 3px;
  background: #e9eaec;
}
.filter { position: relative; width: 177px; margin: 0 31px 5px 96px; }
.filter select {
  display: block;
  width: 100%;
  height: 18px;
  padding: 0 4px;
  border: 1px solid #bbb;
  border-radius: 0;
  appearance: none;
  background: #f2f2f3;
  color: #222;
  font: inherit;
}
.filter .caret { position: absolute; right: 4px; top: 7px; }
.watermark {
  position: absolute;
  right: 5px;
  bottom: 5px;
  display: flex;
  width: 206px;
  height: 62px;
  background: rgba(255, 255, 255, .35);
  pointer-events: none;
}
.watermark svg { width: 62px; height: 62px; opacity: .85; }
.words { display: flex; flex-direction: column; margin-left: -4px; white-space: nowrap; }
.words strong {
  padding-left: 11px;
  color: #3b9080;
  font: bold 29px/41px "Noto Sans CJK SC", sans-serif;
}
.words span { color: #b5dcd5; font: 15px/20px "Open Sans", sans-serif; }
```
